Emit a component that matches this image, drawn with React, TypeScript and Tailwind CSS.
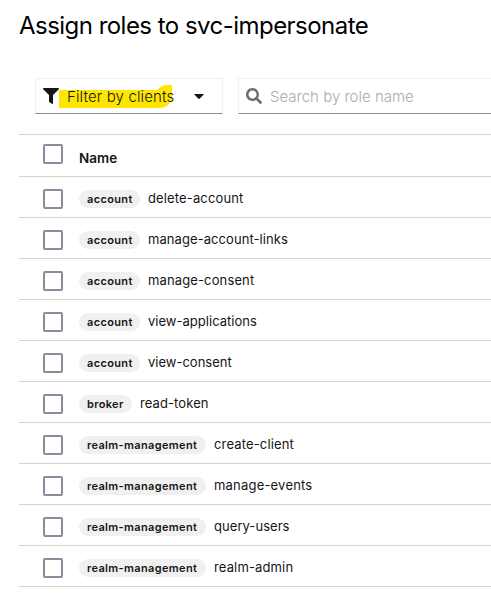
import React from "react";

type Role = { client: string; clientClass: string; name: string; nameClass: string };

const roles: Role[] = [
  { client: "account", clientClass: "w-[61px]", name: "delete-account", nameClass: "tracking-[0.14px]" },
  { client: "account", clientClass: "w-[61px]", name: "manage-account-links", nameClass: "tracking-[0.07px]" },
  { client: "account", clientClass: "w-[61px]", name: "manage-consent", nameClass: "tracking-[0.13px]" },
  { client: "account", clientClass: "w-[61px]", name: "view-applications", nameClass: "tracking-[0.02px]" },
  { client: "account", clientClass: "w-[61px]", name: "view-consent", nameClass: "" },
  { client: "broker", clientClass: "w-[53px]", name: "read-token", nameClass: "tracking-[0.1px]" },
  { client: "realm-management", clientClass: "w-[127px]", name: "create-client", nameClass: "tracking-[0.15px]" },
  { client: "realm-management", clientClass: "w-[127px]", name: "manage-events", nameClass: "tracking-[0.2px]" },
  { client: "realm-management", clientClass: "w-[127px]", name: "query-users", nameClass: "tracking-[0.05px]" },
  { client: "realm-management", clientClass: "w-[127px]", name: "realm-admin", nameClass: "tracking-[0.14px]" },
];

function Checkbox() {
  return <span role="checkbox" aria-checked="false" className="block size-5 shrink-0 rounded-[2px] border-2 border-[#8f8b9d] bg-white" />;
}

export default function App() {
  return (
    <main className="h-[610px] w-[491px] overflow-hidden bg-white pl-[19px] font-['Inter',sans-serif] text-[#151515]">
      <h1 className="h-[78px] pt-[10px] text-2xl leading-8 tracking-[-0.53px] whitespace-nowrap text-black">Assign roles to svc-impersonate</h1>
      <div className="flex h-14 gap-[15px] pl-4">
        <button className="relative flex h-9 w-[188px] items-center border border-[#f0f0f0] border-b-[#8a8d90] pl-[7px] text-left">
          <svg className="absolute top-[5px] left-[23px] h-[25px] w-[115px]" viewBox="0 0 115 25" fill="#ffe600">
            <path d="M0 6H98Q103 1 108 1H113V15Q109 24 101 24H98L93 24H0Z" />
          </svg>
          <svg className="relative size-4" viewBox="0 0 512 512" fill="currentColor">
            <path d="M488 0H24C2.7 0-8 25.9 7 41l185 185v206c0 7.800 3.800 15.200 10.200 19.700l80 56C298 518.700 320 507.700 320 488V226L505 41C520 25.900 509.300 0 488 0z" />
          </svg>
          <span className="mt-0.5 relative ml-2 w-[108px] text-[15px] font-light tracking-[0.14px] whitespace-nowrap">Filter by clients</span>
          <svg className="ml-[19px] h-[5px] w-[10px]" viewBox="0 0 10 5" fill="currentColor"><path d="M.5 0h9q.5.1.2.6L5.500 4.800q-.5.400-1 0L.3.600Q0 .1.500 0z" /></svg>
        </button>
        <div className="flex h-9 flex-1 items-center border-t border-b border-l border-[#f0f0f0] border-b-[#8a8d90] pl-[7px]">
          <svg className="size-4 text-[#6a6e73]" viewBox="0 0 512 512" fill="currentColor">
            <path d="M505 442.700L405.300 343c-4.500-4.500-10.600-7-17-7H372c27.600-35.300 44-79.700 44-128C416 93.100 322.900 0 208 0S0 93.100 0 208s93.100 208 208 208c48.300 0 92.700-16.400 128-44v16.300c0 6.400 2.500 12.500 7 17l99.700 99.700c9.400 9.400 24.600 9.400 33.900 0l28.300-28.300c9.400-9.400 9.400-24.600.1-34zM208 336c-70.700 0-128-57.200-128-128 0-70.700 57.200-128 128-128 70.700 0 128 57.200 128 128 0 70.700-57.200 128-128 128z" />
          </svg>
          <span className="mt-0.5 ml-2 text-[15px] font-light whitespace-nowrap text-[#a8abae]">Search by role name</span>
        </div>
      </div>
      <div className="border-t border-[#d2d2d2]">
        <div className="flex h-[42px] border-b border-[#d2d2d2] pt-[9px] pl-6">
          <Checkbox />
          <span className="mt-[4px] ml-4 text-[13.5px] leading-5 font-semibold">Name</span>
        </div>
        {roles.map((role) => (
          <div key={role.name} className="flex h-[41px] items-center border-b border-[#d2d2d2] pt-[4px] pl-6">
            <Checkbox />
            <span className={`ml-4 flex h-[18px] items-center rounded-full bg-[#f0f0f0] pl-2 text-[11px] font-semibold tracking-[0.35px] whitespace-nowrap ${role.clientClass}`}>{role.client}</span>
            <span className={`mb-[2px] ml-2 text-[13px] leading-5 whitespace-nowrap ${role.nameClass}`}>{role.name}</span>
          </div>
        ))}
      </div>
    </main>
  );
}
